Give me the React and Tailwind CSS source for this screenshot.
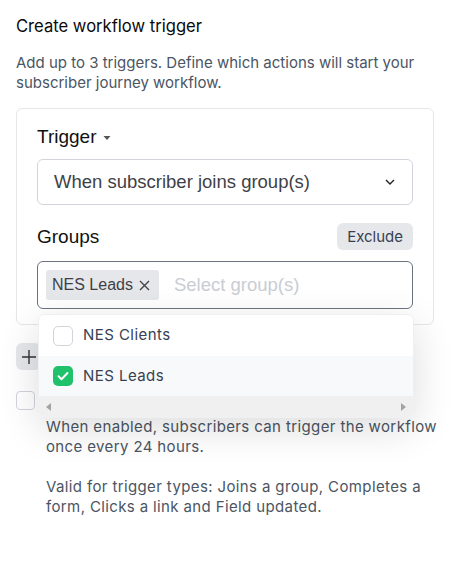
import React from "react";

export default function App() {
  return (
    <div className="w-[456px] h-[567px] bg-white text-[#111827] font-['Inter',sans-serif] pl-4 pt-[14px] relative">
      <div className="w-[418px]">
        <h1 className="text-[16.6px] leading-[24px] font-normal text-[#0a0a0a]">Create workflow trigger</h1>
        <p className="mt-[15px] text-[15px] leading-[20px] text-[#4b5563]">
          Add up to 3 triggers. Define which actions will start your subscriber journey workflow.
        </p>

        <div className="relative mt-[15px]">
          <div className="border border-[#e5e7eb] rounded-md px-[20px] pt-[16px] pb-[15px]">
            <div className="flex items-center gap-[7px] font-['Liberation_Sans',sans-serif] text-[19px] leading-[24px] text-[#111]">
              Trigger
              <svg width="8" height="6" viewBox="0 0 8 6" className="mt-[2px]"><path d="M0.5 1h7L4 5z" fill="#555" /></svg>
            </div>
            <div className="mt-[10px] h-[46px] border border-[#d1d5db] rounded-md flex items-center justify-between pl-[16px] pr-[17px] font-['Liberation_Sans',sans-serif] text-[18.5px] text-[#3f3f46]">
              <span>When subscriber joins group(s)</span>
              <svg width="10" height="6" viewBox="0 0 10 6"><path d="M1 1l4 4 4-4" fill="none" stroke="#222" strokeWidth="1.4" /></svg>
            </div>
            <div className="mt-[18px] flex items-center justify-between">
              <span className="font-['Liberation_Sans',sans-serif] text-[19px] leading-[24px] text-[#111]">Groups</span>
              <span className="h-[27px] px-[10px] rounded-md bg-[#e5e7eb] text-[15px] leading-[27px] text-[#374151]">Exclude</span>
            </div>
            <div className="mt-[11px] h-[48px] border border-[#6b7280] rounded-md flex items-center pl-[8px] font-['Liberation_Sans',sans-serif]">
              <span className="h-[30px] rounded-[3px] bg-[#e5e7eb] flex items-center pl-[6px] pr-[9px] text-[16px] text-[#3f3f46] gap-[6px]">
                NES Leads
                <svg width="11" height="11" viewBox="0 0 11 11"><path d="M1 1l9 9M10 1l-9 9" stroke="#444" strokeWidth="1.4" /></svg>
              </span>
              <span className="ml-[15px] text-[18.5px] text-[#c9cdd3]">Select group(s)</span>
            </div>
          </div>

          <div className="mt-[18px] w-[25px] h-[27px] rounded-md bg-[#e5e7eb] flex items-center justify-center">
            <svg width="16" height="16" viewBox="0 0 16 16"><path d="M8 1v14M1 8h14" stroke="#333" strokeWidth="1.4" /></svg>
          </div>
          <div className="mt-[21px] flex items-start gap-[11px]">
            <div className="w-[19px] h-[19px] border border-[#d1d5db] rounded-[4px] shrink-0" />
          </div>
          <div className="w-[430px] pl-[30px] mt-[7px] text-[15px] leading-[20px] tracking-[0.025em] text-[#4b5563]">
            <p>When enabled, subscribers can trigger the workflow once every 24 hours.</p>
            <p className="mt-[20px]">Valid for trigger types: Joins a group, Completes a form, Clicks a link and Field updated.</p>
          </div>

          <div className="absolute left-[22px] top-[206px] w-[376px] bg-white rounded-md border border-[#eef0f2] shadow-[0_10px_40px_rgba(0,0,0,0.14)] overflow-hidden">
            <div className="h-[41px] flex items-center pl-[14px] gap-[10px] text-[15px] tracking-[0.03em] text-[#374151]">
              <div className="w-[20px] h-[20px] border border-[#d1d5db] rounded-[5px]" />
              NES Clients
            </div>
            <div className="h-[40px] flex items-center pl-[14px] gap-[10px] text-[15px] tracking-[0.03em] text-[#374151] bg-[#f8f9fa]">
              <div className="w-[20px] h-[20px] rounded-[5px] bg-[#1fc16b] flex items-center justify-center">
                <svg width="12" height="10" viewBox="0 0 12 10"><path d="M1.5 5.2l3 3 6-6.2" fill="none" stroke="white" strokeWidth="2" strokeLinecap="round" strokeLinejoin="round" /></svg>
              </div>
              NES Leads
            </div>
            <div className="h-[21px] bg-[#f0f0f0] flex items-center justify-between px-[7px]">
              <svg width="5" height="8" viewBox="0 0 5 8"><path d="M5 0v8L0 4z" fill="#a3a3a3" /></svg>
              <svg width="5" height="8" viewBox="0 0 5 8"><path d="M0 0v8l5-4z" fill="#a3a3a3" /></svg>
            </div>
          </div>
        </div>
      </div>
    </div>
  );
}
